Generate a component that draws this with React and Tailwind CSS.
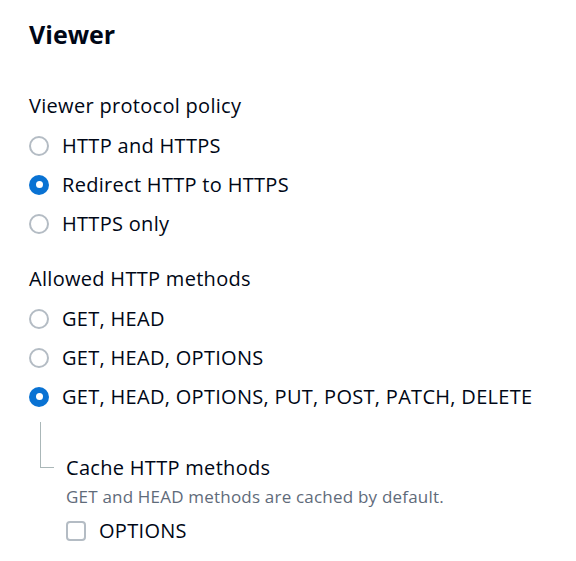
import React from 'react'

const font = { fontFamily: '"Open Sans", "Noto Sans", sans-serif' }

const Radio = ({ checked, label }) => (
  <div className="flex h-[39px] items-center">
    {checked ? (
      <span className="flex h-5 w-5 shrink-0 items-center justify-center rounded-full bg-[#0972d3]">
        <span className="h-[7px] w-[7px] rounded-full bg-white" />
      </span>
    ) : (
      <span className="h-5 w-5 shrink-0 rounded-full border-2 border-[#b4bcc4]" />
    )}
    <span className="ml-[13px] text-[20px] leading-[26px] tracking-[0.3px] text-[#000716]">{label}</span>
  </div>
)

const Group = ({ title, options, className }) => (
  <div className={className}>
    <div className="text-[20px] leading-[28px] tracking-[0.3px] text-[#000716]">{title}</div>
    <div className="mt-[6px] flex flex-col">
      {options.map((o) => (
        <Radio key={o.label} {...o} />
      ))}
    </div>
  </div>
)

export default function App() {
  return (
    <div className="h-[561px] w-[576px] bg-white pl-[29px] pt-[18px]" style={font}>
      <h2 className="text-[25px] font-bold leading-[32px] text-[#000716]">Viewer</h2>

      <Group
        className="mt-[42px]"
        title="Viewer protocol policy"
        options={[
          { label: 'HTTP and HTTPS' },
          { label: 'Redirect HTTP to HTTPS', checked: true },
          { label: 'HTTPS only' },
        ]}
      />

      <Group
        className="mt-[22px]"
        title="Allowed HTTP methods"
        options={[
          { label: 'GET, HEAD' },
          { label: 'GET, HEAD, OPTIONS' },
          { label: 'GET, HEAD, OPTIONS, PUT, POST, PATCH, DELETE', checked: true },
        ]}
      />

      <div className="ml-[11px] mt-[6px] flex items-start">
        <div className="h-[46px] w-[14px] shrink-0 border-b border-l border-[#aab7b8]" />
        <div className="ml-[12px] mt-[33px] flex flex-col">
          <div className="text-[20px] leading-[26px] tracking-[0.3px] text-[#000716]">Cache HTTP methods</div>
          <div className="mt-[5px] text-[17px] leading-[22px] tracking-[0.2px] text-[#5f6b7a]">
            GET and HEAD methods are cached by default.
          </div>
          <label className="mt-[9px] flex h-[28px] items-center">
            <span className="h-5 w-5 shrink-0 rounded-[4px] border-2 border-[#b4bcc4]" />
            <span className="ml-[13px] text-[20px] leading-[26px] tracking-[0.3px] text-[#000716]">OPTIONS</span>
          </label>
        </div>
      </div>
    </div>
  )
}
